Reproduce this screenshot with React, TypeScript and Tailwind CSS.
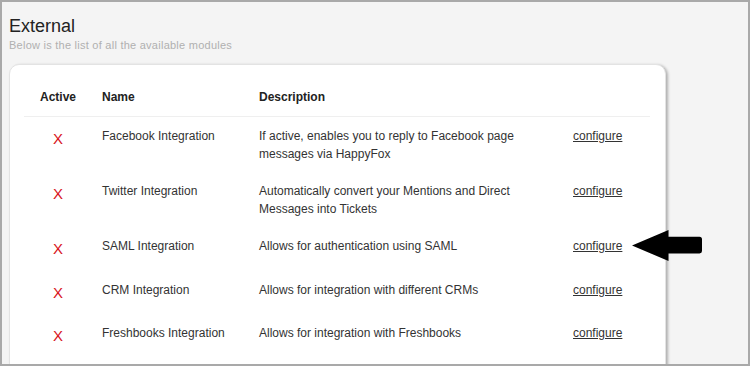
import React from 'react';

const modules = [
  {
    name: 'Facebook Integration',
    description: 'If active, enables you to reply to Facebook page messages via HappyFox',
  },
  {
    name: 'Twitter Integration',
    description: 'Automatically convert your Mentions and Direct Messages into Tickets',
  },
  { name: 'SAML Integration', description: 'Allows for authentication using SAML' },
  { name: 'CRM Integration', description: 'Allows for integration with different CRMs' },
  { name: 'Freshbooks Integration', description: 'Allows for integration with Freshbooks' },
];

const App: React.FC = () => {
  return (
    <div
      className="relative w-[750px] h-[366px] overflow-hidden bg-[#f4f4f4] border-2 border-[#a9a9a9] pl-[7px] pt-[13px]"
      style={{ fontFamily: '"Liberation Sans", Arial, sans-serif' }}
    >
      <h1 className="text-[18px] leading-[22px] text-[#222] m-0">External</h1>
      <p className="text-[11px] leading-[14px] tracking-[0.25px] text-[#b0b0b0] mt-[1px]">
        Below is the list of all the available modules
      </p>

      <div className="mt-[12px] w-[657px] h-[400px] bg-white rounded-[10px] border border-[#e3e3e3] shadow-[2px_1px_3px_rgba(0,0,0,0.28)] pl-[14px] pr-[15px] pt-[23px]">
        {/* header */}
        <div className="flex text-[12px] leading-[18px] font-bold text-[#222] pb-[10px] border-b border-[#efefef]">
          <div className="w-[78px] pr-[10px] text-center">Active</div>
          <div className="w-[157px]">Name</div>
          <div className="w-[314px]">Description</div>
          <div className="flex-1" />
        </div>

        {modules.map((m) => (
          <div
            key={m.name}
            className="flex items-start text-[12px] leading-[18px] text-[#333] pt-[10px] pb-[9px] min-h-[43.5px]"
          >
            <div className="w-[78px] pr-[10px] text-center text-[15px] text-[#d8141c] mt-[3px]">X</div>
            <div className="w-[157px]">{m.name}</div>
            <div className="w-[314px] pr-[32px]">{m.description}</div>
            <div className="flex-1">
              <a href="#" className="underline text-[#333]">
                configure
              </a>
            </div>
          </div>
        ))}
      </div>

      {/* pointer arrow */}
      <svg
        className="absolute left-[628px] top-[226px]"
        width="74"
        height="36"
        viewBox="630 228 74 36"
      >
        <path
          d="M632 245.5 L668.5 230 L668.5 236.8 L699.5 236.8 Q702 236.8 702 239.3 L702 251 Q702 253.4 699.5 253.4 L668.5 253.4 L668.5 261 Z"
          fill="#000"
        />
      </svg>
    </div>
  );
};

export default App;
